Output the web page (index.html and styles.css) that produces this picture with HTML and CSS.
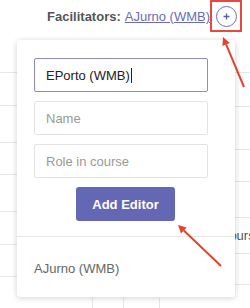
FILE: index.html
```html
<!DOCTYPE html>
<html>
<head>
<meta charset="utf-8">
<link rel="stylesheet" href="styles.css">
</head>
<body>
<div class="page">
  <div class="header">
    <span class="label">Facilitators:</span>
    <a class="link" href="#">AJurno (WMB)</a>
    <span class="add-btn"><span class="plus-circle">
      <svg width="21" height="21" viewBox="0 0 21 21"><circle cx="10.5" cy="10.5" r="10" fill="none" stroke="#6b6fb5" stroke-width="1"/><path d="M10.5 7.5v6M7.5 10.5h6" stroke="#5a5ea8" stroke-width="1.3"/></svg>
    </span></span>
  </div>
  <div class="bg">
    <div class="strips">
      <div class="strip left">
        <div class="row h33"></div><div class="row h33"></div><div class="row h37"></div><div class="row h32"></div><div class="row h37"></div><div class="row h33"></div><div class="row h32"></div>
      </div>
      <div class="middle"></div>
      <div class="strip right">
        <div class="row h33"></div><div class="row h34"></div><div class="row h43"></div><div class="row h32"></div><div class="row h36"></div><div class="row h36 txt"><span class="cut">Courses</span></div><div class="row h31"></div>
      </div>
    </div>
    <div class="bottom-row">
      <div class="cell c1"></div><div class="cell c2"></div><div class="cell c3"></div>
    </div>
  </div>

  <div class="popup">
    <div class="form">
      <div class="input focused">EPorto (WMB)<span class="caret"></span></div>
      <div class="input placeholder">Name</div>
      <div class="input placeholder">Role in course</div>
      <div class="btn-wrap"><button class="btn">Add Editor</button></div>
    </div>
    <div class="list">
      <div class="item">AJurno (WMB)</div>
    </div>
  </div>

  <svg class="arrows" width="250" height="308" viewBox="0 0 250 308">
    <line x1="244" y1="87" x2="226.1" y2="44.4" stroke="#e5422e" stroke-width="2"/>
    <polygon points="223,37 229.8,42.9 222.4,46.0" fill="#e5422e"/>
    <line x1="221" y1="266" x2="183.8" y2="230.5" stroke="#e5422e" stroke-width="2"/>
    <polygon points="178,225 186.6,227.6 181.0,233.4" fill="#e5422e"/>
  </svg>
</div>
</body>
</html>
```
FILE: styles.css
```css
html, body {
  margin: 0;
  padding: 0;
  background: #fff;
}
.page {
  position: relative;
  width: 250px;
  height: 308px;
  overflow: hidden;
  font-family: "Liberation Sans", Arial, sans-serif;
  font-size: 13px;
}
.header {
  height: 40px;
  display: flex;
  align-items: flex-start;
  justify-content: flex-end;
  padding-right: 8px;
  box-sizing: border-box;
}
.label {
  font-weight: bold;
  color: #555;
  margin-top: 9px;
}
.link {
  color: #6a6cb3;
  margin-left: 4px;
  margin-top: 9px;
  text-decoration: underline;
}
.add-btn {
  width: 32px;
  height: 32px;
  box-sizing: border-box;
  border: 2px solid #e8493a;
  display: flex;
  align-items: center;
  justify-content: center;
  margin-left: 0;
}
.plus-circle {
  display: flex;
  width: 21px;
  height: 21px;
}
.bg {
  display: flex;
  flex-direction: column;
}
.strips {
  display: flex;
  height: 258px;
}
.strip {
  display: flex;
  flex-direction: column;
}
.left { width: 17px; }
.right { width: 15px; }
.middle { flex: 1; }
.row {
  box-sizing: border-box;
  border-bottom: 1px solid #e6e6e6;
  flex-shrink: 0;
}
.h31 { height: 31px; }
.h32 { height: 32px; }
.h33 { height: 33px; }
.h34 { height: 34px; }
.h36 { height: 36px; }
.h37 { height: 37px; }
.h43 { height: 43px; }
.txt {
  white-space: nowrap;
  color: #555;
  display: flex;
  align-items: center;
}
.cut { margin-left: -15px; }
.bottom-row {
  display: flex;
  height: 10px;
  padding-left: 92px;
}
.cell {
  border-left: 1px solid #e6e6e6;
  box-sizing: border-box;
}
.c1 { width: 31px; }
.c2 { width: 36px; }
.c3 { flex: 1; }

.popup {
  position: absolute;
  left: 17px;
  top: 40px;
  width: 218px;
  height: 257px;
  background: #fff;
  border-radius: 3px;
  box-shadow: 0 1px 6px rgba(0, 0, 0, 0.18);
  display: flex;
  flex-direction: column;
}
.form {
  padding: 18px 27px 0 17px;
  display: flex;
  flex-direction: column;
  gap: 9px;
  height: 197px;
  box-sizing: border-box;
  border-bottom: 1px solid #e6e6e6;
}
.input {
  height: 34px;
  box-sizing: border-box;
  border: 1px solid #e3e3e3;
  border-radius: 2px;
  padding-left: 11px;
  display: flex;
  align-items: center;
  color: #222;
}
.input.focused {
  border-color: #8a8cc6;
}
.caret {
  display: inline-block;
  width: 1px;
  height: 15px;
  background: #222;
  margin-left: 1px;
}
.placeholder {
  color: #999;
}
.btn-wrap {
  display: flex;
  padding-left: 42px;
}
.btn {
  width: 99px;
  height: 34px;
  background: #6468b4;
  color: #fff;
  border: none;
  border-radius: 3px;
  font-family: "Liberation Sans", Arial, sans-serif;
  font-size: 13px;
  font-weight: bold;
}
.list {
  padding: 24px 17px 0;
}
.item {
  color: #666;
}
.arrows {
  position: absolute;
  left: 0;
  top: 0;
  pointer-events: none;
}
```
